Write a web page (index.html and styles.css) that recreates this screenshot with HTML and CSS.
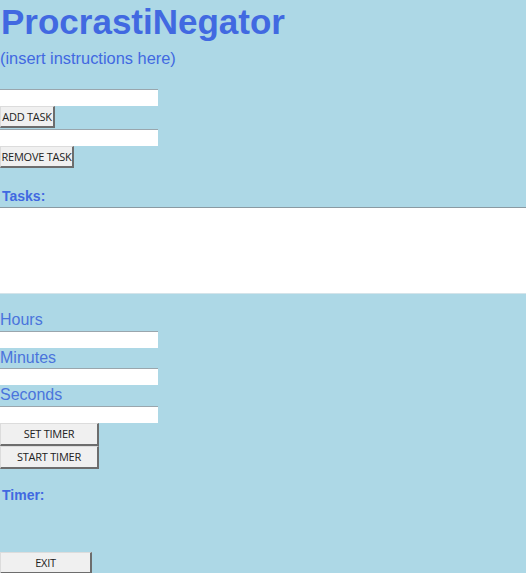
FILE: index.html
```html
<!DOCTYPE html>
<html>
<head>
<meta charset="utf-8">
<link rel="stylesheet" href="styles.css">
</head>
<body>
<div class="page">
  <h1 class="title">ProcrastiNegator</h1>
  <p class="instructions">(insert instructions here)</p>
  <div class="task-controls">
    <input class="field" type="text">
    <button class="btn btn-add">ADD TASK</button>
    <input class="field" type="text">
    <button class="btn btn-remove">REMOVE TASK</button>
  </div>
  <h2 class="section">Tasks:</h2>
  <div class="task-list"></div>
  <div class="timer-controls">
    <label class="label">Hours</label>
    <input class="field" type="text">
    <label class="label">Minutes</label>
    <input class="field" type="text">
    <label class="label">Seconds</label>
    <input class="field" type="text">
    <button class="btn btn-timer">SET TIMER</button>
    <button class="btn btn-timer">START TIMER</button>
  </div>
  <h2 class="section timer-label">Timer:</h2>
  <button class="btn btn-exit">EXIT</button>
</div>
</body>
</html>
```

FILE: styles.css
```css
html, body {
  margin: 0;
  padding: 0;
  background: #add8e6;
}
.page {
  display: flex;
  flex-direction: column;
  align-items: flex-start;
  font-family: "Liberation Sans", Arial, sans-serif;
  color: #4169e1;
}
.title {
  margin: 0;
  padding-left: 1px;
  font-size: 35px;
  line-height: 44px;
  font-weight: bold;
}
.instructions {
  margin: 4px 0 0 0;
  font-size: 16.4px;
  line-height: 20px;
}
.task-controls {
  display: flex;
  flex-direction: column;
  align-items: flex-start;
  margin-top: 21px;
}
.field {
  box-sizing: border-box;
  width: 158px;
  height: 17px;
  margin: 0;
  padding: 0;
  border: none;
  border-top: 1px solid #9aa6ad;
  background: #fff;
  outline: none;
}
.btn {
  box-sizing: border-box;
  margin: 0;
  padding: 0;
  font-family: "Open Sans", "DejaVu Sans", sans-serif;
  font-size: 11px;
  letter-spacing: -0.25px;
  color: #222;
  background: #f0f0f0;
  border: 1px solid #dcdcdc;
  border-right: 2px solid #6d6d6d;
  border-bottom: 2px solid #6d6d6d;
  text-align: center;
}
.btn-add {
  width: 55px;
  height: 22px;
  margin-bottom: 1px;
}
.btn-remove {
  width: 74px;
  height: 22px;
}
.section {
  margin: 20px 0 0 0;
  padding-left: 2px;
  font-size: 14px;
  line-height: 16px;
  font-weight: bold;
}
.task-list {
  box-sizing: border-box;
  width: 100%;
  height: 87px;
  margin-top: 3px;
  background: #fff;
  border-top: 1px solid #8a9aa2;
  border-bottom: 1px solid #d4e4ea;
}
.timer-controls {
  display: flex;
  flex-direction: column;
  align-items: flex-start;
  margin-top: 16px;
}
.label {
  font-size: 16px;
  line-height: 20.5px;
  color: #4a74dc;
}
.btn-timer {
  width: 99px;
  height: 23px;
}
.timer-label {
  margin-top: 18px;
}
.btn-exit {
  width: 92px;
  height: 22px;
  margin-top: 49px;
}
```
